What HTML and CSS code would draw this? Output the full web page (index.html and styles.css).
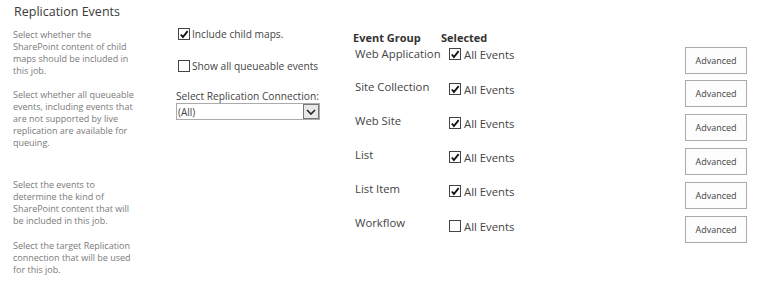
FILE: index.html
```html
<!DOCTYPE html>
<html>
<head>
<meta charset="utf-8">
<link rel="stylesheet" href="styles.css">
</head>
<body>
<div class="page">
  <div class="title">Replication Events</div>
  <div class="cols">
    <div class="desc">
      <p class="p1">Select whether the<br>SharePoint content of child<br>maps should be included in<br>this job.</p>
      <p class="p2">Select whether all queueable<br>events, including events that<br>are not supported by live<br>replication are available for<br>queuing.</p>
      <p class="p3">Select the events to<br>determine the kind of<br>SharePoint content that will<br>be included in this job.</p>
      <p class="p4">Select the target Replication<br>connection that will be used<br>for this job.</p>
    </div>
    <div class="mid">
      <label class="chk row1"><span class="box on"><svg viewBox="0 0 11 11" width="11" height="11"><path d="M2 5.5 L4.3 8.2 L9.5 1.8" fill="none" stroke="#111" stroke-width="2"/></svg></span>Include child maps.</label>
      <label class="chk row2"><span class="box"></span>Show all queueable events</label>
      <div class="sel-label">Select Replication Connection:</div>
      <div class="select"><span class="sel-val">(All)</span><span class="sel-btn"><svg viewBox="0 0 10 6" width="10" height="6"><path d="M1 1 L5 5 L9 1" fill="none" stroke="#222" stroke-width="1.6"/></svg></span></div>
    </div>
    <div class="events">
      <div class="hd">Event Group</div>
      <div class="hd">Selected</div>
      <div></div>

      <div class="grp">Web Application</div>
      <div class="sel first"><span class="box on"><svg viewBox="0 0 11 11" width="11" height="11"><path d="M2 5.5 L4.3 8.2 L9.5 1.8" fill="none" stroke="#111" stroke-width="2"/></svg></span>All Events</div>
      <div class="btncell"><button class="adv">Advanced</button></div>

      <div class="grp">Site Collection</div>
      <div class="sel"><span class="box on"><svg viewBox="0 0 11 11" width="11" height="11"><path d="M2 5.5 L4.3 8.2 L9.5 1.8" fill="none" stroke="#111" stroke-width="2"/></svg></span>All Events</div>
      <div class="btncell"><button class="adv">Advanced</button></div>

      <div class="grp">Web Site</div>
      <div class="sel"><span class="box on"><svg viewBox="0 0 11 11" width="11" height="11"><path d="M2 5.5 L4.3 8.2 L9.5 1.8" fill="none" stroke="#111" stroke-width="2"/></svg></span>All Events</div>
      <div class="btncell"><button class="adv">Advanced</button></div>

      <div class="grp">List</div>
      <div class="sel"><span class="box on"><svg viewBox="0 0 11 11" width="11" height="11"><path d="M2 5.5 L4.3 8.2 L9.5 1.8" fill="none" stroke="#111" stroke-width="2"/></svg></span>All Events</div>
      <div class="btncell"><button class="adv">Advanced</button></div>

      <div class="grp">List Item</div>
      <div class="sel"><span class="box on"><svg viewBox="0 0 11 11" width="11" height="11"><path d="M2 5.5 L4.3 8.2 L9.5 1.8" fill="none" stroke="#111" stroke-width="2"/></svg></span>All Events</div>
      <div class="btncell"><button class="adv">Advanced</button></div>

      <div class="grp">Workflow</div>
      <div class="sel last"><span class="box"></span>All Events</div>
      <div class="btncell"><button class="adv">Advanced</button></div>
    </div>
  </div>
</div>
</body>
</html>
```
FILE: styles.css
```css
* { box-sizing: border-box; }
html, body { margin: 0; padding: 0; background: #fff; }
body { font-family: "Open Sans", "Segoe UI", sans-serif; color: #444; }
.page { width: 760px; height: 284px; }
.title { font-size: 12.5px; padding: 5px 0 0 14px; line-height: 14px; color: #3a3a3a; }
.cols { display: flex; }
.desc { width: 176px; flex: none; padding: 10px 0 0 13px; color: #7a7a7a; font-size: 9px; line-height: 12px; white-space: nowrap; }
.desc p { margin: 0; }
.p1 { margin-bottom: 12px !important; }
.p2 { margin-bottom: 30px !important; }
.p3 { margin-bottom: 13px !important; }
.mid { width: 176px; flex: none; padding-top: 9px; font-size: 10.2px; color: #444; }
.chk { display: flex; align-items: center; height: 12px; white-space: nowrap; }
.row1 { margin-left: 2px; }
.row2 { margin-left: 2px; margin-top: 20px; }
.box { width: 12px; height: 12px; border: 1px solid #444; display: inline-flex; align-items: center; justify-content: center; background: #fff; margin-right: 2px; flex: none; }
.box svg { display: block; }
.sel-label { margin-top: 18px; line-height: 13px; white-space: nowrap; }
.select { display: flex; width: 144px; height: 17px; border: 1px solid #ababab; align-items: center; }
.sel-val { flex: 1; padding-left: 1px; font-size: 10px; }
.sel-btn { width: 16px; height: 15px; border: 1px solid #777; background: #e8e8e8; display: flex; align-items: center; justify-content: center; }
.events { display: grid; grid-template-columns: 88px 244px 62px; grid-template-rows: 16px 33px repeat(5, 34px); padding-top: 12px; margin-left: 1px; font-size: 11.3px; }
.hd { font-weight: bold; color: #333; font-size: 11px; line-height: 14px; white-space: nowrap; }
.grp { padding-left: 2px; line-height: 14px; white-space: nowrap; }
.sel { display: flex; align-items: center; height: 14px; margin-top: 2px; padding-left: 8px; white-space: nowrap; }
.sel .box { margin-right: 3px; }
.sel.first { margin-top: 0; }
.sel.last { margin-top: 3px; }
.btncell { display: flex; }
.adv { width: 62px; height: 27px; border: 1px solid #ababab; background: #fdfdfd; font-family: inherit; font-size: 9px; color: #444; padding: 0; }
```
